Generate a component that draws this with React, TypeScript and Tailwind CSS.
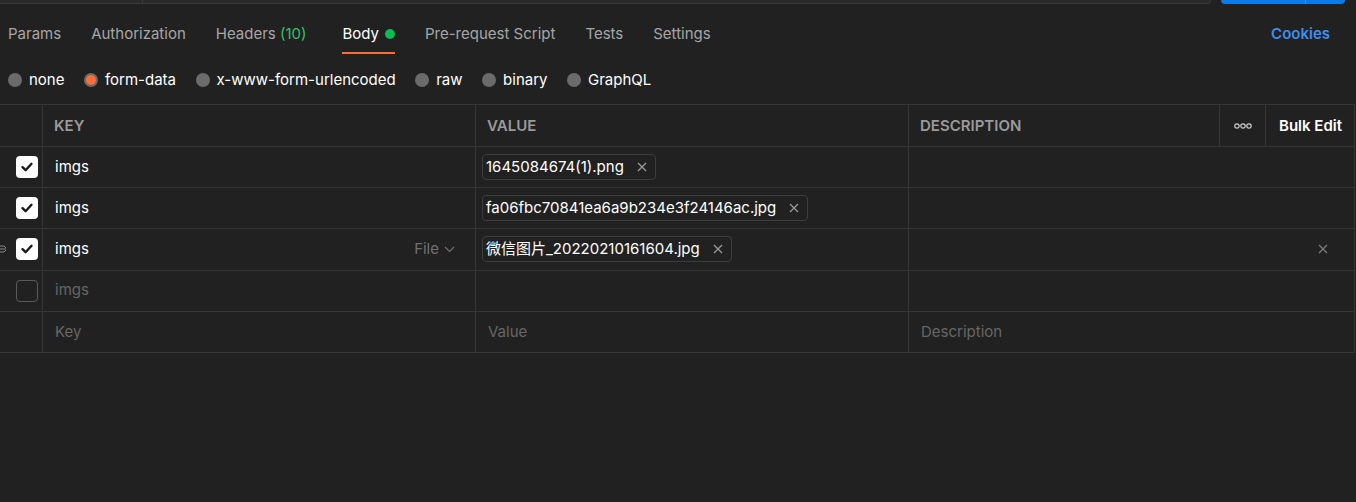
import React from "react";

const B = "border-[#353535]";

function Check({ on }: { on: boolean }) {
  if (!on)
    return <div className="w-[22px] h-[22px] rounded-[4px] border border-[#5a5a5a]" />;
  return (
    <div className="w-[22px] h-[22px] rounded-[4px] bg-white flex items-center justify-center">
      <svg width="14" height="14" viewBox="0 0 14 14" fill="none">
        <path d="M2.5 7.2 L5.6 10.2 L11.5 3.8" stroke="#1a1a1a" strokeWidth="2.4" strokeLinecap="round" strokeLinejoin="round" />
      </svg>
    </div>
  );
}

function X({ c = "#9a9a9a", s = 10 }: { c?: string; s?: number }) {
  return (
    <svg width={s} height={s} viewBox="0 0 10 10" fill="none">
      <path d="M1 1 L9 9 M9 1 L1 9" stroke={c} strokeWidth="1.3" />
    </svg>
  );
}

function Chip({ name }: { name: string }) {
  return (
    <div className="h-[26px] flex items-center rounded-[4px] border border-[#3d3d3d] pl-[3px] pr-[8px] gap-[13px] text-white">
      <span>{name}</span>
      <X />
    </div>
  );
}

function Row({
  check,
  keyText,
  keyPh,
  value,
  desc,
  handle,
  file,
  del,
}: {
  check?: boolean | null;
  keyText: string;
  keyPh?: boolean;
  value?: React.ReactNode;
  desc?: React.ReactNode;
  handle?: boolean;
  file?: boolean;
  del?: boolean;
}) {
  return (
    <div className={`grid grid-cols-[43px_433px_433px_446px] h-[41.2px] border-b ${B}`}>
      <div className={`relative border-r ${B} flex items-center pl-[16px]`}>
        {handle && (
          <svg className="absolute left-[-3px] top-[14px]" width="10" height="12" viewBox="0 0 10 12" fill="none">
            <path d="M0 3 H7 L9 5 M0 6 H9 M0 9 H7 L9 7" stroke="#8a8a8a" strokeWidth="1" />
          </svg>
        )}
        {check !== null && check !== undefined && <Check on={check} />}
      </div>
      <div className={`border-r ${B} flex items-center pl-[12px] pr-[20px] justify-between`}>
        <span className={keyPh ? "text-[#666]" : "text-white"}>{keyText}</span>
        {file && (
          <span className="flex items-center gap-[5px] text-[#707070]">
            File
            <svg width="11" height="7" viewBox="0 0 11 7" fill="none">
              <path d="M1 1 L5.5 5.5 L10 1" stroke="#707070" strokeWidth="1.2" />
            </svg>
          </span>
        )}
      </div>
      <div className={`border-r ${B} flex items-center pl-[6px]`}>{value}</div>
      <div className={`border-r ${B} flex items-center pl-[12px] pr-[26px] justify-between`}>
        <span>{desc}</span>
        {del && <X c="#7a7a7a" s={10} />}
      </div>
    </div>
  );
}

export default function App() {
  return (
    <div className="w-[1356px] h-[502px] bg-[#212121] overflow-hidden text-[15px] font-['Inter','Noto_Sans_CJK_SC',sans-serif]">
      {/* top strip */}
      <div className="flex h-[4px]">
        <div className="relative w-[1211px] bg-[#2a2a2a] border-b border-r border-[#3a3a3a] rounded-br-[4px]">
          <div className="absolute left-[142px] top-0 h-full w-px bg-[#3a3a3a]" />
        </div>
        <div className="relative ml-[10px] w-[124px] bg-[#0a7bea] rounded-b-[5px]">
          <div className="absolute left-[84px] top-0 h-full w-px bg-[#3b8fe6]" />
        </div>
      </div>

      {/* tabs */}
      <div className="flex items-start pl-[8px] pr-[26px] mt-[20px] h-[29px]">
        <div className="flex gap-[30px] text-[#a6a6a6]">
          <span className="leading-[20px]">Params</span>
          <span className="leading-[20px]">Authorization</span>
          <span className="leading-[20px]">
            Headers <span className="text-[#2fc36b]">(10)</span>
          </span>
          <div className="flex flex-col ml-[6px]">
            <span className="leading-[20px] text-white flex items-center gap-[6px]">
              Body
              <span className="w-[10px] h-[10px] rounded-full bg-[#0cbb52]" />
            </span>
            <div className="mt-[8px] h-[2px] bg-[#ff6c37]" />
          </div>
          <span className="leading-[20px]">Pre-request Script</span>
          <span className="leading-[20px]">Tests</span>
          <span className="leading-[20px]">Settings</span>
        </div>
        <span className="ml-auto leading-[20px] text-[#3d8ef0] font-semibold">Cookies</span>
      </div>

      {/* radios */}
      <div className="flex items-center pl-[8px] mt-[17px] h-[20px] gap-[19.5px] text-white">
        {["none", "form-data", "x-www-form-urlencoded", "raw", "binary", "GraphQL"].map((r) => (
          <div key={r} className="flex items-center gap-[7px]">
            {r === "form-data" ? (
              <span className="w-[14px] h-[14px] rounded-full bg-[#ff6c37] border-[2px] border-[#6a6a6a]" />
            ) : (
              <span className="w-[14px] h-[14px] rounded-full bg-[#6b6b6b]" />
            )}
            <span>{r}</span>
          </div>
        ))}
      </div>

      {/* table */}
      <div className={`mt-[14px] w-[1355px] border-t ${B}`}>
        <div className={`grid grid-cols-[43px_433px_433px_311px_46px_89px] h-[42px] border-b ${B} font-semibold`}>
          <div className={`border-r ${B}`} />
          <div className={`border-r ${B} flex items-center pt-[2px] pl-[11px] text-[#9a9a9a]`}>KEY</div>
          <div className={`border-r ${B} flex items-center pt-[2px] pl-[11px] text-[#9a9a9a]`}>VALUE</div>
          <div className={`border-r ${B} flex items-center pt-[2px] pl-[11px] text-[#9a9a9a]`}>DESCRIPTION</div>
          <div className={`border-r ${B} flex items-center justify-center`}>
            <svg width="18" height="6" viewBox="0 0 18 6" fill="none">
              <circle cx="3" cy="3" r="2.2" stroke="#d0d0d0" strokeWidth="1.2" />
              <circle cx="9" cy="3" r="2.2" stroke="#d0d0d0" strokeWidth="1.2" />
              <circle cx="15" cy="3" r="2.2" stroke="#d0d0d0" strokeWidth="1.2" />
            </svg>
          </div>
          <div className={`border-r ${B} flex items-center pt-[2px] pl-[13px] text-white`}>Bulk Edit</div>
        </div>
        <Row check={true} keyText="imgs" value={<Chip name="1645084674(1).png" />} />
        <Row check={true} keyText="imgs" value={<Chip name="fa06fbc70841ea6a9b234e3f24146ac.jpg" />} />
        <Row check={true} keyText="imgs" handle file del value={<Chip name="微信图片_20220210161604.jpg" />} />
        <Row check={false} keyText="imgs" keyPh />
        <Row
          check={null}
          keyText="Key"
          keyPh
          value={<span className="text-[#666] pl-[6px]">Value</span>}
          desc={<span className="text-[#666]">Description</span>}
        />
      </div>
    </div>
  );
}
